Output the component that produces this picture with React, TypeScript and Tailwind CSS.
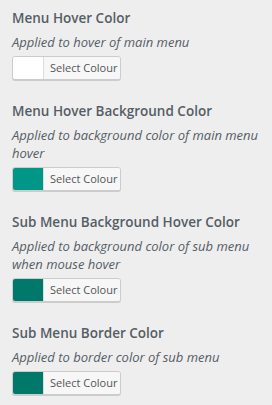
import React from 'react';

type ColorOption = {
  title: string;
  description: string;
  color: string;
};

const options: ColorOption[] = [
  {
    title: 'Menu Hover Color',
    description: 'Applied to hover of main menu',
    color: '#ffffff',
  },
  {
    title: 'Menu Hover Background Color',
    description: 'Applied to background color of main menu hover',
    color: '#009688',
  },
  {
    title: 'Sub Menu Background Hover Color',
    description: 'Applied to background color of sub menu when mouse hover',
    color: '#00796b',
  },
  {
    title: 'Sub Menu Border Color',
    description: 'Applied to border color of sub menu',
    color: '#00796b',
  },
];

const ColorPicker: React.FC<{ color: string }> = ({ color }) => (
  <button
    type="button"
    className="flex h-[24px] w-[109px] overflow-hidden rounded-[3px] border border-[#cccccc] bg-[#f7f7f7] p-0 shadow-[0_1px_0_#cccccc]"
  >
    <span className="h-full w-[30px] shrink-0" style={{ backgroundColor: color }} />
    <span className="flex h-full flex-1 items-center border-l border-[#dddddd] bg-[#f7f7f7] pl-[6px] text-[11px] text-[#555555]">
      Select Colour
    </span>
  </button>
);

export default function App() {
  return (
    <div
      className="min-h-[405px] w-[272px] bg-[#eeeeee] pl-[12px] pr-[8px] pt-[8px]"
      style={{ fontFamily: '"Open Sans", "Noto Sans", sans-serif' }}
    >
      {options.map((option, index) => (
        <div key={index} className={index === 0 ? '' : 'mt-[21px]'}>
          <h3 className="text-[13.5px] font-semibold leading-[20px] text-[#555d66]">{option.title}</h3>
          <p className="mt-[5px] text-[13px] italic leading-[18px] text-[#555d66]">{option.description}</p>
          <div className="mt-[5px]">
            <ColorPicker color={option.color} />
          </div>
        </div>
      ))}
    </div>
  );
}
